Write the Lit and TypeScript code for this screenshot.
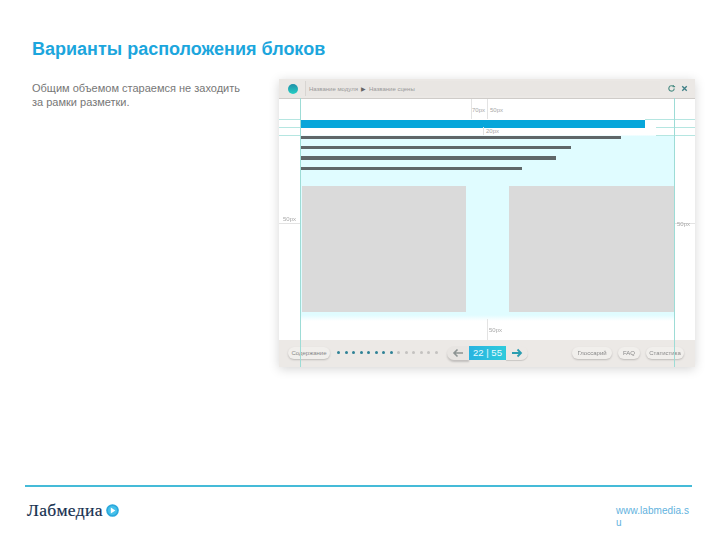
import { LitElement, html, css } from "lit";
import { customElement } from "lit/decorators.js";

const bars = [320.5, 271, 256, 222];
const dots = Array.from({ length: 14 }, (_, i) => i);

@customElement("app-root")
export class AppRoot extends LitElement {
  static styles = css`
    :host { display: block; width: 720px; height: 540px; background: #fff; font-family: "Liberation Sans", Arial, sans-serif; overflow: hidden; }
    .page { width: 720px; height: 540px; display: flex; flex-direction: column; }
    h1 { margin: 0; padding: 39px 0 0 32px; height: 25px; font-size: 18px; line-height: 20px; font-weight: 700; color: #1ca6dd; }
    .main { display: flex; height: 421px; }
    .desc { width: 247px; padding: 17px 0 0 32px; font-size: 11px; line-height: 14px; color: #777; margin: 0; }
    .desc p { margin: 0; width: 215px; }
    .win { position: relative; width: 416px; height: 288px; margin-top: 15px; background: #fff; box-shadow: 0 2px 10px rgba(0,0,0,.17); display: flex; flex-direction: column; filter: blur(.5px); }
    .top { height: 20px; background: #ebe8e5; border-bottom: 1px solid #cfccc9; display: flex; align-items: center; box-sizing: border-box; padding: 0 6px 0 9px; font-size: 6px; color: #999; }
    .ball { width: 10px; height: 10px; border-radius: 50%; background: linear-gradient(#1e8fa8, #27cfc4); margin-right: 7px; }
    .crumb { width: 355px; height: 15px; background: #e9e6e3; border-left: 1px solid #d8d5d2; display: flex; align-items: center; gap: 3px; padding-left: 3px; box-sizing: border-box; }
    .crumb b { color: #666; font-size: 6px; font-weight: 400; }
    .ico { width: 9px; height: 9px; display: block; margin-left: 4px; }
    .ico.first { margin-left: 6.5px; }
    .body { flex: 1; position: relative; display: flex; flex-direction: column; }
    .sheet { margin-left: 21px; width: 375px; height: 241px; box-sizing: border-box; padding-top: 21px; background: linear-gradient(#fff 36px, #e0fcff 37px, #e0fcff 216px, #fff 222px); display: flex; flex-direction: column; }
    .hero { width: 345px; height: 8px; background: #07a6da; margin-bottom: 7.5px; }
    .bar { height: 3.5px; background: #5f6668; margin-bottom: 6.9px; }
    .blocks { display: flex; gap: 43px; margin: 8.5px 0 0 2px; }
    .block { width: 164px; height: 126px; background: #dadada; }
    .block + .block { width: 165px; }
    .foot { height: 27px; background: #ece9e6; display: flex; align-items: center; box-sizing: border-box; padding: 0 11px 2px 9px; font-size: 6px; color: #888; position: relative; }
    .pill { height: 12px; width: 42px; border-radius: 7px; background: #f1efec; box-shadow: 0 1px 2px rgba(0,0,0,.2); display: flex; align-items: center; justify-content: center; white-space: nowrap; }
    .pill.g { width: 40px; }
    .pill.f { width: 22px; }
    .pill.s { width: 38px; }
    .dots { display: flex; gap: 4.5px; margin-left: 7px; width: 110px; }
    .dot { width: 3px; height: 3px; border-radius: 50%; background: #2f8296; }
    .dot.off { background: #c4c2c0; }
    .nav { display: flex; align-items: center; width: 81px; height: 14px; }
    .back { width: 22px; height: 14px; border-radius: 8px 0 0 8px; background: #e8e5e2; box-shadow: 0 2px 2px rgba(0,0,0,.18); display: flex; align-items: center; justify-content: center; }
    .count { width: 37px; height: 14px; background: linear-gradient(90deg, #29b3e0, #2fcbdc); color: #eafaff; font-size: 9.5px; display: flex; align-items: center; justify-content: center; }
    .next { width: 22px; height: 14px; border-radius: 0 8px 8px 0; background: #ece9e6; box-shadow: 0 1px 1px rgba(0,0,0,.15); display: flex; align-items: center; justify-content: center; }
    .right { margin-left: auto; display: flex; gap: 6px; }
    .ann { position: absolute; background: #9ddcd6; }
    .v { width: 1px; top: 19px; bottom: 0; }
    .v.a { left: 21px; }
    .v.b { left: 395px; }
    .h { height: 1px; background: #b5e6e1; }
    .tick { position: absolute; width: 1px; background: #e3e3e3; }
    .lab { position: absolute; font-size: 6px; color: #a8a8a8; }
    .bottom { margin: 0 28px 0 25px; border-top: 2px solid #45bbd8; display: flex; justify-content: space-between; padding: 13px 0 0 2px; }
    .logo { display: flex; align-items: center; gap: 3px; font-family: "Liberation Serif", serif; font-size: 17.5px; color: #16304f; height: 20px; letter-spacing: .35px; -webkit-text-stroke: .2px #16304f; }
    .url { width: 76px; font-size: 10px; letter-spacing: .05px; line-height: 12px; color: #62b2de; word-break: break-all; margin-top: 5px; }
  `;

  render() {
    return html`<div class="page">
      <h1>Варианты расположения блоков</h1>
      <div class="main">
        <div class="desc"><p>Общим объемом стараемся не заходить за рамки разметки.</p></div>
        <div class="win">
          <div class="top">
            <span class="ball"></span>
            <div class="crumb"><span>Название модуля</span><b>▶</b><span>Название сцены</span></div>
            <svg class="ico first" viewBox="0 0 10 10" fill="none" stroke="#4f8f86" stroke-width="1.3"><path d="M8 5a3 3 0 1 1-1-2.3M7 1v2H9"/></svg>
            <svg class="ico" viewBox="0 0 10 10" fill="none" stroke="#3f7f86" stroke-width="1.5"><path d="M2.5 2.5l5 5M7.5 2.5l-5 5"/></svg>
          </div>
          <div class="body">
            <div class="sheet">
              <div class="hero"></div>
              ${bars.map((w) => html`<div class="bar" style="width:${w}px"></div>`)}
              <div class="blocks"><div class="block"></div><div class="block"></div></div>
            </div>
            <div class="foot">
              <div class="pill">Содержание</div>
              <div class="dots">${dots.map((i) => html`<span class="dot ${i > 7 ? "off" : ""}"></span>`)}</div>
              <div class="nav">
                <div class="back"><svg width="12" height="10" viewBox="0 0 12 10" fill="none" stroke="#8d9493" stroke-width="1.6"><path d="M11 5H2M5.5 1.5L2 5l3.5 3.5"/></svg></div>
                <div class="count">22 | 55</div>
                <div class="next"><svg width="12" height="10" viewBox="0 0 12 10" fill="none" stroke="#2a9db0" stroke-width="1.8"><path d="M1 5h9M6.5 1.5L10 5 6.5 8.5"/></svg></div>
              </div>
              <div class="right"><div class="pill g">Глоссарий</div><div class="pill f">FAQ</div><div class="pill s">Статистика</div></div>
            </div>
            <i class="ann h" style="left:0;top:20px;width:21px"></i>
            <i class="ann h" style="left:0;top:28px;width:21px"></i>
            <i class="ann h" style="left:0;top:36px;width:21px"></i>
            <i class="ann h" style="left:366px;top:20px;width:50px"></i>
            <i class="ann h" style="left:377px;top:28px;width:39px"></i>
            <i class="ann h" style="left:377px;top:36px;width:39px"></i>
            <i class="tick" style="left:192px;top:0;height:20px"></i>
            <i class="tick" style="left:208px;top:0;height:20px"></i>
            <i class="tick" style="left:204px;top:28px;height:8px"></i>
            <i class="tick" style="left:208px;top:220px;height:21px"></i>
            <i class="tick" style="left:0;top:124px;width:21px;height:1px"></i>
            <i class="tick" style="left:396px;top:124px;width:20px;height:1px"></i>
            <span class="lab" style="left:193px;top:8px">70px</span>
            <span class="lab" style="left:211px;top:8px">50px</span>
            <span class="lab" style="left:207px;top:29px">20px</span>
            <span class="lab" style="left:4px;top:117px">50px</span>
            <span class="lab" style="left:398px;top:122px">50px</span>
            <span class="lab" style="left:210px;top:228px">50px</span>
          </div>
          <i class="ann v a"></i><i class="ann v b"></i>
        </div>
      </div>
      <div class="bottom">
        <div class="logo">Лабмедиа<svg width="13" height="13" viewBox="0 0 13 13"><circle cx="6.5" cy="6.5" r="6.3" fill="#2ba8dc"/><circle cx="6.5" cy="6.5" r="4.6" fill="#45c0ea"/><path d="M4.8 3.6l4.6 2.9-4.6 2.9z" fill="#fff"/></svg></div>
        <div class="url">www.labmedia.su</div>
      </div>
    </div>`;
  }
}
